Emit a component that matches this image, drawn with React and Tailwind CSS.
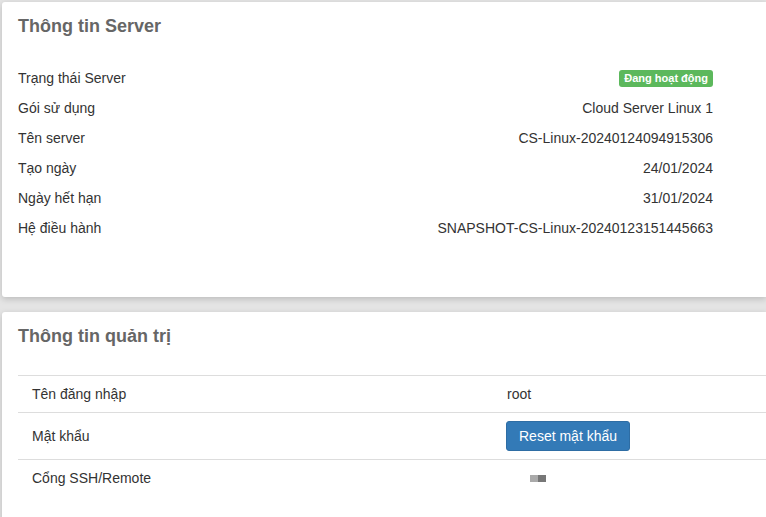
export default function App() {
  const serverRows = [
    ["Gói sử dụng", "Cloud Server Linux 1"],
    ["Tên server", "CS-Linux-20240124094915306"],
    ["Tạo ngày", "24/01/2024"],
    ["Ngày hết hạn", "31/01/2024"],
    ["Hệ điều hành", "SNAPSHOT-CS-Linux-20240123151445663"],
  ];

  return (
    <div className="min-h-screen overflow-hidden bg-[#e4e4e4] pl-[2px] pt-[2px] font-['Liberation_Sans',Arial,sans-serif] text-[14px] leading-[20px] text-[#333]">
      {/* Server info card */}
      <div className="h-[295px] rounded-l-[3px] bg-white px-4 pt-[13px] shadow-[0_2px_6px_rgba(0,0,0,0.18)]">
        <h3 className="text-[18px] font-bold leading-[22px] text-[#666]">Thông tin Server</h3>
        <div className="mt-[26px] w-[695px]">
          <div className="flex h-[30px] items-center justify-between">
            <span>Trạng thái Server</span>
            <span className="rounded-[3px] bg-[#5cb85c] px-[5px] text-[11px] font-bold leading-[17px] text-white">
              Đang hoạt động
            </span>
          </div>
          {serverRows.map(([label, value]) => (
            <div key={label} className="flex h-[30px] items-center justify-between">
              <span>{label}</span>
              <span>{value}</span>
            </div>
          ))}
        </div>
      </div>

      {/* Admin info card */}
      <div className="mt-[15px] h-[230px] rounded-l-[3px] bg-white pl-4 pt-[13px] shadow-[0_2px_6px_rgba(0,0,0,0.18)]">
        <h3 className="text-[18px] font-bold leading-[22px] text-[#666]">Thông tin quản trị</h3>
        <div className="mt-[28px]">
          <div className="grid grid-cols-[475px_1fr] border-t border-[#dddddd]">
            <div className="px-[14px] py-2">Tên đăng nhập</div>
            <div className="px-[14px] py-2">root</div>
          </div>
          <div className="grid grid-cols-[475px_1fr] items-center border-t border-[#dddddd]">
            <div className="px-[14px] py-2">Mật khẩu</div>
            <div className="px-[13px] py-2">
              <button className="h-[30px] rounded-[3px] border border-[#2e6da4] bg-[#337ab7] px-3 text-[14px] text-white">
                Reset mật khẩu
              </button>
            </div>
          </div>
          <div className="grid grid-cols-[475px_1fr] border-t border-[#dddddd]">
            <div className="px-[14px] py-2">Cổng SSH/Remote</div>
            <div className="flex items-center px-[14px] py-2 pl-[37px]">
              <span className="h-[7px] w-[8px] bg-[#aaaaaa]" />
              <span className="h-[7px] w-[8px] bg-[#777777]" />
            </div>
          </div>
        </div>
      </div>
    </div>
  );
}
